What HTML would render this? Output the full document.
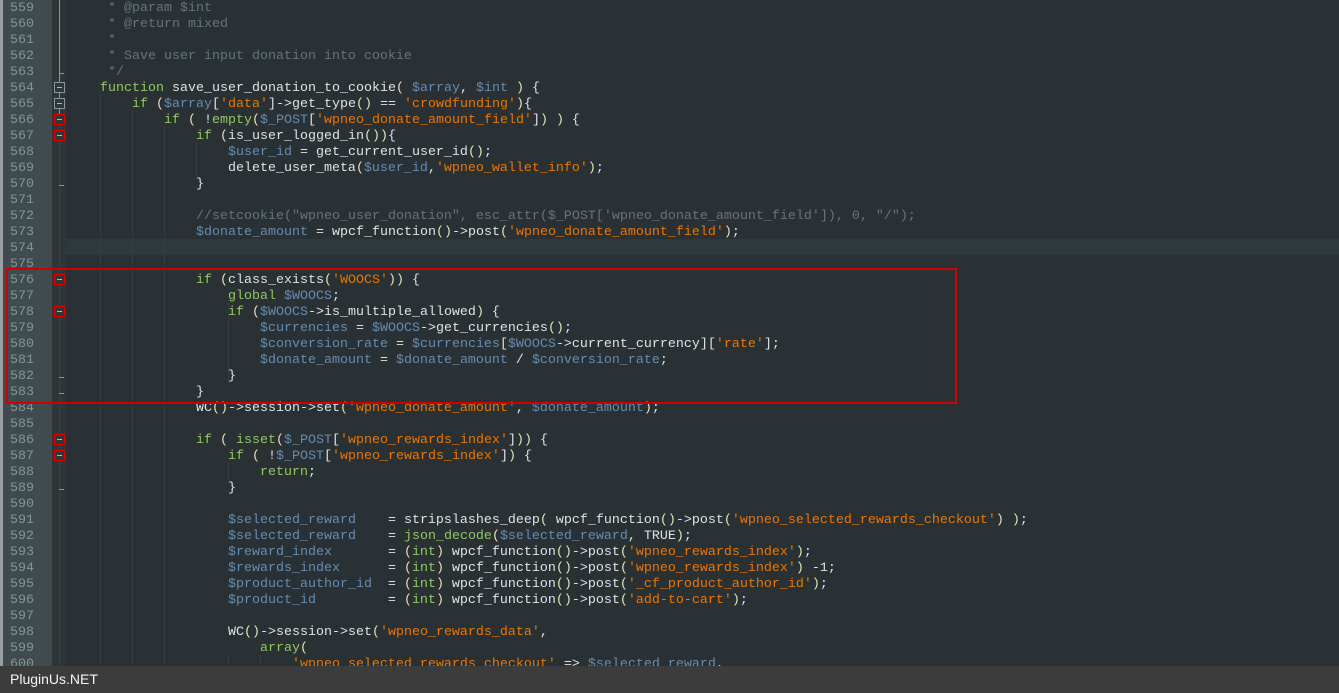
<!DOCTYPE html>
<html><head><meta charset="utf-8"><style>
html,body{margin:0;padding:0;width:1339px;height:693px;overflow:hidden;background:#293134;}
#g{position:absolute;left:0;top:0;width:3px;height:666px;background:#9aa0a2;}
#gut{position:absolute;left:3px;top:0;width:49px;height:666px;background:#3f4b4e;}
#fold{position:absolute;left:52px;top:0;width:14px;height:666px;background:#2f3638;}
#code{position:absolute;left:68px;top:1px;margin:0;font:13.33px/16px "Liberation Mono",monospace;color:#e0e2e4;white-space:pre;}
.k{color:#93c763}.s{color:#ec7600}.v{color:#678cb1}.c{color:#66747b}.p{color:#e8e2b7}
#hl{position:absolute;left:66px;top:239px;width:1273px;height:16px;background:#2f393c;}
#box{position:absolute;left:6px;top:268px;width:947px;height:132px;border:2px solid #d40000;}
#bar{position:absolute;left:0;top:666px;width:1339px;height:27px;background:#3c3c3c;color:#f4f4f4;font:14px/27px "Liberation Sans",sans-serif;padding-left:10px;box-sizing:border-box;}
.fb{position:absolute;left:54px;width:11px;height:11px;border:1px solid #8a979a;background:#2f3638;box-sizing:border-box;}
.fb:after{content:"";position:absolute;left:2px;top:4px;width:5px;height:1px;background:#b0b8ba;}
.fb.r{border-color:#e00000;}
.tk{position:absolute;left:59px;width:5px;height:1px;background:#8a979a;}
.guide{position:absolute;width:0;border-left:1px dotted #3d474a;}
</style></head><body>
<div id="g"></div><div id="gut"></div><div id="fold"></div>
<div id="hl"></div>
<div style="position:absolute;left:59px;top:0;width:1px;height:124px;background:#8a979a"></div>
<div style="position:absolute;left:59px;top:124px;width:1px;height:542px;background:#d40000"></div>
<div class="guide" style="left:100px;top:95px;height:571px"></div>
<div class="guide" style="left:132px;top:111px;height:555px"></div>
<div class="guide" style="left:164px;top:127px;height:539px"></div>
<div class="guide" style="left:196px;top:143px;height:32px"></div>
<div class="guide" style="left:228px;top:303px;height:80px"></div>
<div class="guide" style="left:228px;top:463px;height:16px"></div>
<div class="guide" style="left:228px;top:655px;height:11px"></div>
<div class="guide" style="left:260px;top:655px;height:11px"></div>
<pre id="code"><span class="c">     * @param $int
     * @return mixed
     *
     * Save user input donation into cookie
     */</span>
    <span class="k">function</span> save_user_donation_to_cookie<span class="p">(</span> <span class="v">$array</span>, <span class="v">$int</span> <span class="p">)</span> {
        <span class="k">if</span> <span class="p">(</span><span class="v">$array</span>[<span class="s">'data'</span>]-&gt;get_type<span class="p">()</span> == <span class="s">'crowdfunding'</span><span class="p">)</span>{
            <span class="k">if</span> <span class="p">(</span> !<span class="k">empty</span><span class="p">(</span><span class="v">$_POST</span>[<span class="s">'wpneo_donate_amount_field'</span>]<span class="p">)</span> <span class="p">)</span> {
                <span class="k">if</span> <span class="p">(</span>is_user_logged_in<span class="p">())</span>{
                    <span class="v">$user_id</span> = get_current_user_id<span class="p">()</span>;
                    delete_user_meta<span class="p">(</span><span class="v">$user_id</span>,<span class="s">'wpneo_wallet_info'</span><span class="p">)</span>;
                }

                <span class="c">//setcookie("wpneo_user_donation", esc_attr($_POST['wpneo_donate_amount_field']), 0, "/");</span>
                <span class="v">$donate_amount</span> = wpcf_function<span class="p">()</span>-&gt;post<span class="p">(</span><span class="s">'wpneo_donate_amount_field'</span><span class="p">)</span>;


                <span class="k">if</span> <span class="p">(</span>class_exists<span class="p">(</span><span class="s">'WOOCS'</span><span class="p">))</span> {
                    <span class="k">global</span> <span class="v">$WOOCS</span>;
                    <span class="k">if</span> <span class="p">(</span><span class="v">$WOOCS</span>-&gt;is_multiple_allowed<span class="p">)</span> {
                        <span class="v">$currencies</span> = <span class="v">$WOOCS</span>-&gt;get_currencies<span class="p">()</span>;
                        <span class="v">$conversion_rate</span> = <span class="v">$currencies</span>[<span class="v">$WOOCS</span>-&gt;current_currency][<span class="s">'rate'</span>];
                        <span class="v">$donate_amount</span> = <span class="v">$donate_amount</span> / <span class="v">$conversion_rate</span>;
                    }
                }
                WC<span class="p">()</span>-&gt;session-&gt;set<span class="p">(</span><span class="s">'wpneo_donate_amount'</span>, <span class="v">$donate_amount</span><span class="p">)</span>;

                <span class="k">if</span> <span class="p">(</span> <span class="k">isset</span><span class="p">(</span><span class="v">$_POST</span>[<span class="s">'wpneo_rewards_index'</span>]<span class="p">))</span> {
                    <span class="k">if</span> <span class="p">(</span> !<span class="v">$_POST</span>[<span class="s">'wpneo_rewards_index'</span>]<span class="p">)</span> {
                        <span class="k">return</span>;
                    }

                    <span class="v">$selected_reward</span>    = stripslashes_deep<span class="p">(</span> wpcf_function<span class="p">()</span>-&gt;post<span class="p">(</span><span class="s">'wpneo_selected_rewards_checkout'</span><span class="p">)</span> <span class="p">)</span>;
                    <span class="v">$selected_reward</span>    = <span class="k">json_decode</span><span class="p">(</span><span class="v">$selected_reward</span>, TRUE<span class="p">)</span>;
                    <span class="v">$reward_index</span>       = <span class="p">(</span><span class="k">int</span><span class="p">)</span> wpcf_function<span class="p">()</span>-&gt;post<span class="p">(</span><span class="s">'wpneo_rewards_index'</span><span class="p">)</span>;
                    <span class="v">$rewards_index</span>      = <span class="p">(</span><span class="k">int</span><span class="p">)</span> wpcf_function<span class="p">()</span>-&gt;post<span class="p">(</span><span class="s">'wpneo_rewards_index'</span><span class="p">)</span> -1;
                    <span class="v">$product_author_id</span>  = <span class="p">(</span><span class="k">int</span><span class="p">)</span> wpcf_function<span class="p">()</span>-&gt;post<span class="p">(</span><span class="s">'_cf_product_author_id'</span><span class="p">)</span>;
                    <span class="v">$product_id</span>         = <span class="p">(</span><span class="k">int</span><span class="p">)</span> wpcf_function<span class="p">()</span>-&gt;post<span class="p">(</span><span class="s">'add-to-cart'</span><span class="p">)</span>;

                    WC<span class="p">()</span>-&gt;session-&gt;set<span class="p">(</span><span class="s">'wpneo_rewards_data'</span>,
                        <span class="k">array</span><span class="p">(</span>
                            <span class="s">'wpneo_selected_rewards_checkout'</span> =&gt; <span class="v">$selected_reward</span>,</pre>
<div style="position:absolute;left:10px;top:1px;font:13.33px/16px 'Liberation Mono',monospace;color:#81969a;white-space:pre">559
560
561
562
563
564
565
566
567
568
569
570
571
572
573
574
575
576
577
578
579
580
581
582
583
584
585
586
587
588
589
590
591
592
593
594
595
596
597
598
599
600</div>
<div class="fb" style="top:82px"></div>
<div class="fb" style="top:98px"></div>
<div class="fb r" style="top:114px"></div>
<div class="fb r" style="top:130px"></div>
<div class="fb r" style="top:274px"></div>
<div class="fb r" style="top:306px"></div>
<div class="fb r" style="top:434px"></div>
<div class="fb r" style="top:450px"></div>
<div class="tk" style="top:73px"></div>
<div class="tk" style="top:185px"></div>
<div class="tk" style="top:377px"></div>
<div class="tk" style="top:393px"></div>
<div class="tk" style="top:489px"></div>
<div id="box"></div>
<div id="bar">PluginUs.NET</div>
</body></html>
